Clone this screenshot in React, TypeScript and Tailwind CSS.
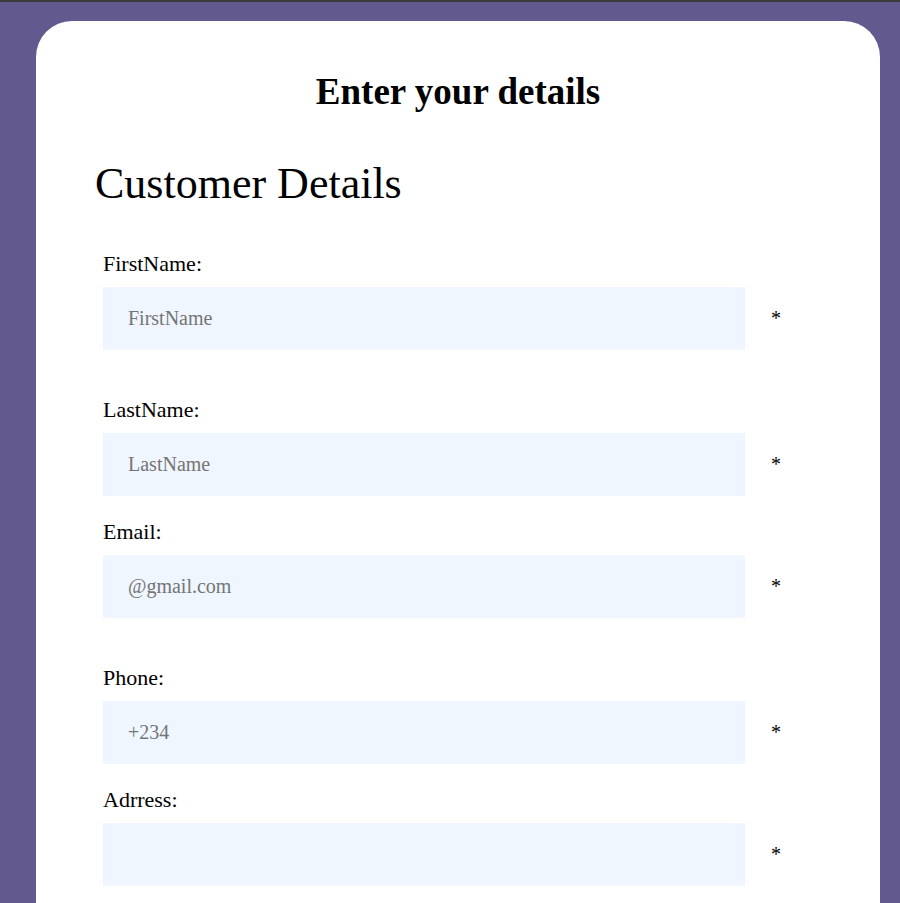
import React from 'react';

interface Field {
  label: string;
  placeholder: string;
  type: string;
  gap: string;
}

const fields: Field[] = [
  { label: 'FirstName:', placeholder: 'FirstName', type: 'text', gap: 'mt-0' },
  { label: 'LastName:', placeholder: 'LastName', type: 'text', gap: 'mt-[47px]' },
  { label: 'Email:', placeholder: '@gmail.com', type: 'email', gap: 'mt-[23px]' },
  { label: 'Phone:', placeholder: '+234', type: 'tel', gap: 'mt-[47px]' },
  { label: 'Adrress:', placeholder: '', type: 'text', gap: 'mt-[23px]' },
];

const App: React.FC = () => {
  return (
    <div className="min-h-screen bg-[#625a8f] border-t-2 border-[#3d3d3d] pt-[19px] font-['Liberation_Serif',serif] text-black">
      <div className="ml-[36px] w-[844px] bg-white rounded-t-[36px] pt-[50px] pb-[120px] px-[59px]">
        <h1 className="text-center font-bold text-[37px] leading-[1.15]">Enter your details</h1>

        <h2 className="mt-[45px] text-[44px] leading-[1.15]">Customer Details</h2>

        <form className="mt-[42px] pl-[8px]" onSubmit={(e) => e.preventDefault()}>
          {fields.map((f) => (
            <div key={f.label} className={f.gap}>
              <label className="block text-[22px] leading-[25px]">{f.label}</label>
              <div className="mt-[11px] flex items-center">
                <input
                  type={f.type}
                  placeholder={f.placeholder}
                  className="w-[642px] h-[63px] bg-[#eff6ff] pl-[25px] text-[20px] outline-none placeholder:text-[#757575]"
                />
                <span className="ml-[26px] text-[20px] leading-[1.15]">*</span>
              </div>
            </div>
          ))}
        </form>
      </div>
    </div>
  );
};

export default App;
